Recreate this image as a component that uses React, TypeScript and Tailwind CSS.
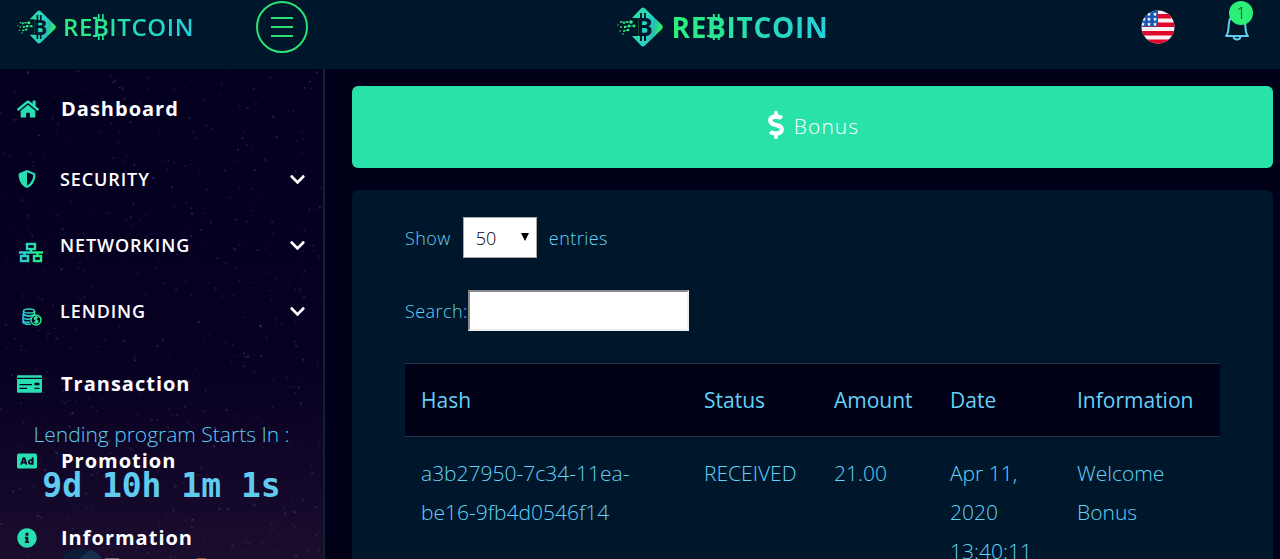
import { useId, type ReactNode } from "react";
import {
  FaAd,
  FaChevronDown,
  FaDollarSign,
  FaHome,
  FaInfoCircle,
  FaMoneyCheck,
  FaShieldAlt,
} from "react-icons/fa";
import clsx from "clsx";

function LogoMark({ className }: { className?: string }) {
  const id = useId();

  return (
    <svg viewBox="0 0 48 40" className={className} aria-hidden="true">
      <defs>
        <linearGradient id={id} x1="0" y1="0" x2="1" y2="0.3">
          <stop offset="0" stopColor="#27e59a" />
          <stop offset="0.6" stopColor="#27d3c3" />
          <stop offset="0.8" stopColor="#2bbfae" />
          <stop offset="1" stopColor="#2bf06f" />
        </linearGradient>
      </defs>
      <path
        d="M16 11 L24.5 2 Q27 -1 29.5 2 L45.5 17.5 Q48 20 45.5 22.5 L29.5 38 Q27 41 24.500 38 L16 29 H22 V11 Z"
        fill={`url(#${id})`}
      />
      <text
        x="20"
        y="29"
        fontSize="25"
        fontWeight="700"
        fill="#00172b"
        className="font-['Open_Sans',sans-serif]"
      >
        B
      </text>
      <path d="M25 6v7M29 6v7M25 27v7M29 27v7" stroke="#00172b" strokeWidth="2" />
      <g fill="#2bf07c">
        <circle cx="2" cy="18" r="0.7" />
        <circle cx="5" cy="15" r="0.9" />
        <circle cx="8" cy="16" r="1.1" />
        <circle cx="11" cy="15" r="1" />
        <circle cx="15" cy="15" r="1.8" />
        <circle cx="18" cy="19" r="1.4" />
        <circle cx="13" cy="19" r="1.5" />
        <circle cx="9" cy="20" r="1.2" />
        <circle cx="5" cy="20" r="0.9" />
        <circle cx="12" cy="23" r="1.3" />
        <circle cx="8" cy="24" r="1" />
        <circle cx="4" cy="24" r="0.8" />
        <circle cx="7" cy="27" r="0.8" />
      </g>
      <path
        d="M5 15H15M9 20L13 19H18M8 24L12 23"
        stroke="#2be58e"
        strokeWidth="0.8"
        fill="none"
      />
    </svg>
  );
}

function Logo({ large = false }: { large?: boolean }) {
  return (
    <a
      href="#"
      aria-label="Rebitcoin"
      className={clsx("flex items-center", large ? "gap-2" : "gap-1.5")}
    >
      <LogoMark className={large ? "h-10 w-12" : "h-[34px] w-[41px]"} />
      <span
        className={clsx(
          "flex font-['Open_Sans',sans-serif] leading-10 tracking-wide",
          large ? "text-[28px] font-bold" : "text-2xl font-semibold",
        )}
      >
        <span className="bg-gradient-to-r from-[#2bf07c] to-[#2aea8c] bg-clip-text text-transparent">
          RE
        </span>
        <span className="relative text-[#29e695]">
          B
          <svg
            viewBox="0 0 20 40"
            className="absolute inset-0 h-full w-full"
            preserveAspectRatio="none"
            aria-hidden="true"
          >
            <path
              d="M7 7v5M12 7v5M7 28v5M12 28v5M0 11h5M0 29h5"
              stroke="#29e695"
              strokeWidth="2"
            />
          </svg>
        </span>
        <span className="bg-gradient-to-r from-[#28e3a0] to-[#27cfdc] bg-clip-text text-transparent">
          ITCOIN
        </span>
      </span>
    </a>
  );
}

function NetworkIcon() {
  return (
    <svg viewBox="0 0 26 22" className="h-[22px] w-[26px]" fill="none" aria-hidden="true">
      <defs>
        <linearGradient id="network" x1="0" x2="26" y1="0" y2="0" gradientUnits="userSpaceOnUse">
          <stop stopColor="#27c8e8" />
          <stop offset="1" stopColor="#2bf06f" />
        </linearGradient>
      </defs>
      <g stroke="url(#network)" strokeWidth="2.400">
        <rect x="9" y="3" width="8" height="5" />
        <rect x="3" y="15" width="7" height="5" />
        <rect x="16" y="15" width="7" height="5" />
        <path d="M13 8v3M1 11.500h24.010M6.500 11v4M19.500 11v4" />
      </g>
    </svg>
  );
}

function CoinsIcon() {
  return (
    <svg viewBox="0 0 20 18" className="h-[18px] w-5" fill="none" aria-hidden="true">
      <defs>
        <linearGradient id="coins" x1="0" x2="20" y1="0" y2="0" gradientUnits="userSpaceOnUse">
          <stop stopColor="#27c8e8" />
          <stop offset="1" stopColor="#2bf06f" />
        </linearGradient>
      </defs>
      <g stroke="url(#coins)" strokeWidth="1.5">
        <ellipse cx="7" cy="3" rx="5.500" ry="2" />
        <path d="M1.500 3v3c0 2.500 11 2.500 11 0V3" />
        <path d="M1 6v3c0 2 5 2.600 8 1.800M1 9v3c0 2 4 2.500 7 2M1 12v2c0 2 5 2.500 8 2M2 6.500c2 1.500 8 1.500 10 0" />
        <circle cx="14" cy="12" r="5" />
        <path d="M16 10c-1-1.300-3.700-1-3.700.5 0 1.700 3.600 1 3.600 2.800 0 1.600-2.900 1.700-3.900.3M14 8v8" />
      </g>
    </svg>
  );
}

function BellIcon() {
  return (
    <svg
      viewBox="0 0 24 28"
      className="h-7 w-6"
      fill="none"
      stroke="#5fcdf0"
      strokeWidth="2"
      strokeLinejoin="round"
      aria-hidden="true"
    >
      <path d="M1 23h22c-2.500-2-2.500-6-2.700-11C20 5 17 2 12 2S4 5 3.700 12C3.500 17 3.500 21 1 23Z" />
      <path d="M8.500 23.500c.5 4 6.500 4 7 0" />
    </svg>
  );
}

const flagStars = [
  [8, 4],
  [14, 4],
  [3, 9],
  [8, 9],
  [14, 9],
  [2, 14],
  [8, 14],
  [14, 14],
];

function FlagIcon() {
  return (
    <svg viewBox="0 0 34 34" className="size-[34px]" aria-hidden="true">
      <clipPath id="flag">
        <circle cx="17" cy="17" r="16.500" />
      </clipPath>
      <g clipPath="url(#flag)">
        <path d="M0 0h34v34H0z" fill="#f4f2f4" />
        <path
          d="M0 4h34v4.500H0zM0 12.500h34v4.500H0zM0 21h34v4.500H0zM0 29.500h34v5H0z"
          fill="#e0062c"
        />
        <path d="M0 0h17v16.500H0z" fill="#1556b4" />
        {flagStars.map(([x, y]) => (
          <path
            key={`${x}-${y}`}
            transform={`translate(${x} ${y})`}
            d="M0-2 .6-.6 2-.5 1 .5 1.300 2 0 1.200-1.300 2-1 .5-2-.5-.6-.6Z"
            fill="#fff"
          />
        ))}
      </g>
    </svg>
  );
}

/* Deterministic star field for the sidebar background */
const stars = Array.from({ length: 620 }, (_, i) => {
  const rand = (n: number) => {
    const v = Math.sin(i * 12.9898 + n * 78.233) * 43758.5453;
    return v - Math.floor(v);
  };
  return { x: rand(1) * 324, y: rand(2) * 500, r: 0.5 + rand(3) * 0.8, o: 0.05 + rand(4) * 0.13 };
});

function StarField() {
  return (
    <svg className="absolute inset-0 h-full w-full" aria-hidden="true">
      <pattern id="stars" width="324" height="500" patternUnits="userSpaceOnUse">
        {stars.map((s, i) => (
          <circle key={i} cx={s.x} cy={s.y} r={s.r} fill="#b9b4dc" opacity={s.o} />
        ))}
      </pattern>
      <rect width="100%" height="100%" fill="url(#stars)" />
    </svg>
  );
}

function NavLink({ icon, children }: { icon: ReactNode; children: ReactNode }) {
  return (
    <a
      href="#"
      className="flex h-[77px] items-center pt-0.5 pl-[17px] text-xl font-bold tracking-wider"
    >
      <span className="w-11 text-[#27dfb0]">{icon}</span>
      {children}
    </a>
  );
}

function NavGroup({ icon, children }: { icon: ReactNode; children: ReactNode }) {
  return (
    <button
      type="button"
      className="flex h-[66px] w-full items-center pr-[17px] pl-[18px] text-lg font-semibold tracking-wider"
    >
      <span className="w-[42px] text-[#27dfb0]">{icon}</span>
      {children}
      <FaChevronDown className="ml-auto size-[17px]" />
    </button>
  );
}

function Sidebar() {
  return (
    <aside className="relative w-[325px] shrink-0 overflow-hidden border-r-2 border-[#0b2430] bg-gradient-to-b from-[#040020] via-[#070122] via-60% to-[#1b0d2e]">
      <StarField />
      <nav className="relative text-white">
        <NavLink icon={<FaHome className="size-[22px]" />}>Dashboard</NavLink>
        <NavGroup icon={<FaShieldAlt className="size-[18px]" />}>SECURITY</NavGroup>
        <NavGroup
          icon={
            <span className="flex pt-3.5">
              <NetworkIcon />
            </span>
          }
        >
          NETWORKING
        </NavGroup>
        <NavGroup
          icon={
            <span className="flex pt-3 pl-1">
              <CoinsIcon />
            </span>
          }
        >
          LENDING
        </NavGroup>
        <NavLink icon={<FaMoneyCheck className="h-[22px] w-[25px]" />}>Transaction</NavLink>
        <NavLink icon={<FaAd className="size-5" />}>Promotion</NavLink>
        <NavLink icon={<FaInfoCircle className="size-5" />}>Information</NavLink>
      </nav>

      {/* Countdown pinned over the lower part of the menu */}
      <div className="pointer-events-none absolute inset-x-0 bottom-0 text-center text-[#5fcbef]">
        <p className="text-[21px] leading-10 font-light">Lending program Starts In :</p>
        <p className="font-['DejaVu_Sans_Mono',monospace] text-[33px] leading-16 font-bold">
          9d 10h 1m 1s
        </p>
        <svg viewBox="0 0 323 41" className="h-[41px] w-full" aria-hidden="true">
          <path d="M61 41Q68 30 81 30Q94 30 102 41Z" fill="#0c1c36" />
          <path d="M79 41L90 32Q98 34 102 41Z" fill="#17304f" />
          <path d="M105 40h14v1h-14z" fill="#6c6478" />
          <path d="M197 40h9v1h-9z" fill="#a0521f" />
        </svg>
      </div>
    </aside>
  );
}

function Header() {
  return (
    <header className="flex h-[69px] shrink-0 items-start bg-[#00172b]">
      <div className="flex h-[54px] w-[324px] items-center justify-between pr-4 pl-4">
        <Logo />
        <button
          type="button"
          aria-label="Toggle menu"
          className="flex size-[52px] flex-col items-center justify-center gap-[7px] rounded-full border-2 border-[#2be073]"
        >
          <span className="h-0.5 w-[22px] bg-[#2be073]" />
          <span className="h-0.5 w-[22px] bg-[#2be073]" />
          <span className="h-0.5 w-[22px] bg-[#2be073]" />
        </button>
      </div>
      <div className="flex h-[54px] flex-1 items-center justify-center">
        <Logo large />
      </div>
      <div className="flex h-[54px] w-40 items-center justify-between pr-[31px] pl-[21px]">
        <button type="button" aria-label="Language">
          <FlagIcon />
        </button>
        <button type="button" aria-label="Notifications" className="relative">
          <BellIcon />
          <span className="absolute -top-3 left-1 flex size-6 items-center justify-center rounded-full bg-[#2bf075] text-base font-light text-[#0d3a35]">
            1
          </span>
        </button>
      </div>
    </header>
  );
}

const rows = [
  {
    hash: "a3b27950-7c34-11ea-be16-9fb4d0546f14",
    status: "RECEIVED",
    amount: "21.00",
    date: "Apr 11, 2020 13:40:11",
    information: "Welcome Bonus",
  },
];

function BonusTable() {
  return (
    <table className="w-full table-fixed text-left text-[21px] leading-[39px] text-[#63d2f6]">
      <thead className="border-y border-[#272f42] bg-[#000016]">
        <tr className="h-[73px]">
          <th className="w-[283px] px-4 font-normal">Hash</th>
          <th className="w-[130px] px-4 font-normal">Status</th>
          <th className="w-[116px] px-4 font-normal">Amount</th>
          <th className="w-[127px] px-4 font-normal">Date</th>
          <th className="px-4 font-normal">Information</th>
        </tr>
      </thead>
      <tbody>
        {rows.map((row) => (
          <tr key={row.hash} className="align-top font-light">
            <td className="px-4 pt-[17px]">{row.hash}</td>
            <td className="px-4 pt-[17px]">{row.status}</td>
            <td className="px-4 pt-[17px]">{row.amount}</td>
            <td className="px-4 pt-[17px]">{row.date}</td>
            <td className="px-4 pt-[17px]">{row.information}</td>
          </tr>
        ))}
      </tbody>
    </table>
  );
}

export default function App() {
  return (
    <div className="flex h-screen flex-col overflow-hidden bg-[#000018] font-['Open_Sans',sans-serif]">
      <Header />
      <div className="flex min-h-0 flex-1">
        <Sidebar />
        <main className="min-w-0 flex-1 overflow-hidden pt-[17px] pr-[7px] pl-[27px]">
          <h1 className="flex h-[82px] items-center justify-center rounded-md bg-[#28e2a9] pr-1 text-[21px] font-light tracking-wider text-white">
            <FaDollarSign className="mr-1 mb-1 size-7" />
            Bonus
          </h1>

          <section className="mt-[22px] rounded-md bg-[#00172b] px-[53px] pt-[27px] pb-10">
            <div className="flex items-center gap-3 text-lg font-light tracking-wide text-[#63d2f6]">
              <label htmlFor="entries">Show</label>
              <span className="relative">
                <select
                  id="entries"
                  defaultValue="50"
                  className="h-[41px] w-[74px] appearance-none border border-[#a9a9a9] bg-white pl-3 tracking-normal text-black"
                >
                  <option>10</option>
                  <option>25</option>
                  <option>50</option>
                  <option>100</option>
                </select>
                <svg
                  viewBox="0 0 8 8"
                  className="pointer-events-none absolute top-4 right-2 size-2"
                  aria-hidden="true"
                >
                  <path d="M0 0h8L4 8z" />
                </svg>
              </span>
              <label htmlFor="entries">entries</label>
            </div>

            <div className="mt-8 mb-8 flex items-center text-lg font-light tracking-wide text-[#63d2f6]">
              <label htmlFor="search">Search:</label>
              <input
                id="search"
                type="search"
                className="h-[41px] w-[221px] border-2 border-t-[#8a8a8a] border-r-[#eeeeee] border-b-[#eeeeee] border-l-[#8a8a8a] bg-white px-2 text-black"
              />
            </div>

            <BonusTable />
          </section>
        </main>
      </div>
    </div>
  );
}
